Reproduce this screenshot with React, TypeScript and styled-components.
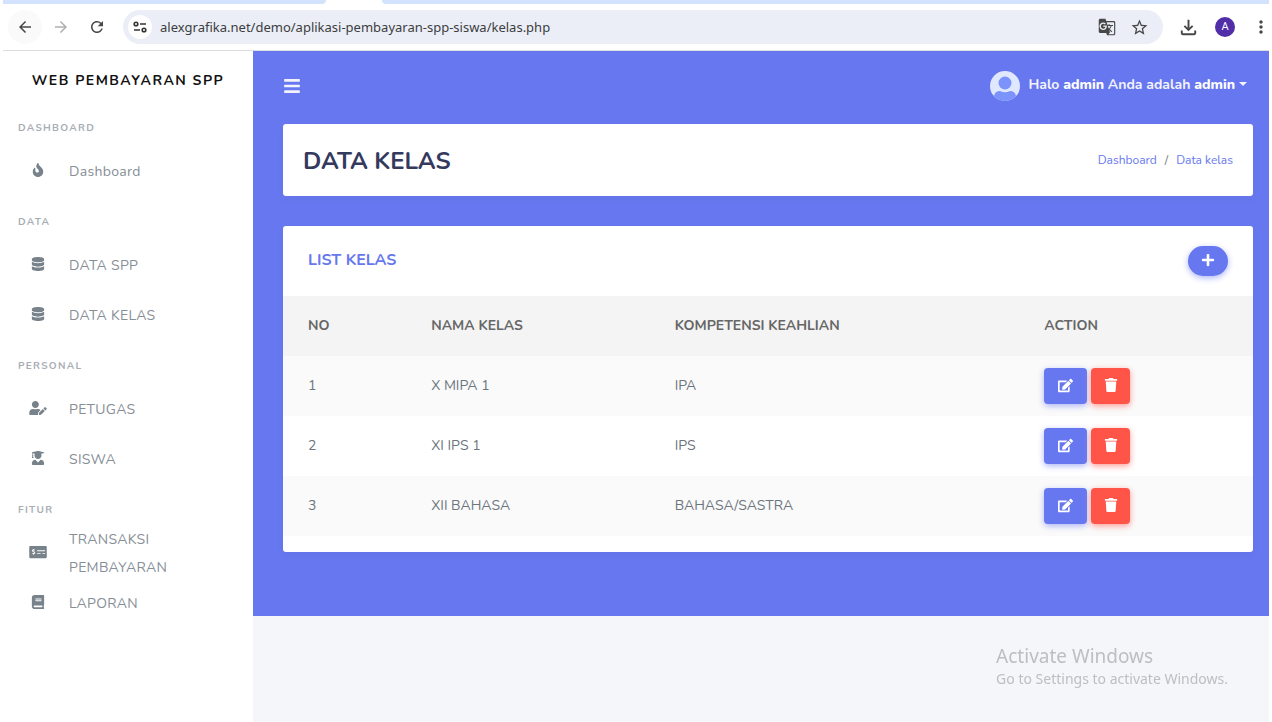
import React from "react";
import styled, { createGlobalStyle } from "styled-components";
import {
  FaBars, FaBook, FaDatabase, FaEdit, FaFire, FaMoneyCheckAlt, FaPlus, FaTrash, FaUserEdit, FaUserGraduate,
} from "react-icons/fa";
import {
  MdArrowBack, MdArrowForward, MdGTranslate, MdMoreVert, MdOutlineFileDownload, MdRefresh, MdStarBorder,
} from "react-icons/md";

const primary = "#6777ef";
const danger = "#ff5549";
const systemFont = `"Segoe UI", "Noto Sans", "Open Sans", sans-serif`;

const GlobalStyle = createGlobalStyle`
  *, *::before, *::after { box-sizing: border-box; }
  body {
    margin: 0;
    background: #fff;
    color: #6c757d;
    font: 400 14px/28px Nunito, Lato, sans-serif;
  }
  button, input { font: inherit; }
  button { cursor: pointer; border: 0; padding: 0; }
  a { text-decoration: none; color: inherit; }
  h1, h2, h4, ul, ol, p { margin: 0; padding: 0; }
  ul, ol { list-style: none; }
  svg { display: block; }
`;

const Window = styled.div`
  min-height: 100vh;
  display: flex;
  flex-direction: column;
  padding: 0 3px;
`;

const TabStrip = styled.div`
  display: flex;
  height: 4px;
  background: #fff;
`;

const TabGap = styled.div<{ $grow?: boolean }>`
  background: #d3e3fd;
  width: 323px;
  flex: ${(p) => (p.$grow ? "1" : "none")};
  margin-left: ${(p) => (p.$grow ? "56px" : "0")};
  border-radius: ${(p) => (p.$grow ? "0 0 0 8px" : "0 0 8px 0")};
`;

const Toolbar = styled.header`
  display: flex;
  align-items: center;
  height: 47px;
  padding: 0 0 0 5px;
  border-bottom: 1px solid #dcdee0;
`;

const ToolButton = styled.button<{ $shade?: boolean; $faded?: boolean }>`
  display: grid;
  place-items: center;
  flex: none;
  width: 34px;
  height: 34px;
  margin-right: 2px;
  border-radius: 50%;
  background: ${(p) => (p.$shade ? "#fafafa" : "transparent")};
  color: ${(p) => (p.$faded ? "#b0b0b0" : "#474747")};
`;

const AddressBar = styled.div`
  display: flex;
  align-items: center;
  flex: 1;
  height: 34px;
  margin: 0 8px 0 7px;
  padding: 0 8px 0 5px;
  border-radius: 17px;
  background: #ebeef7;
`;

const SiteInfo = styled.button`
  display: grid;
  place-items: center;
  flex: none;
  width: 24px;
  height: 24px;
  border-radius: 50%;
  background: #fff;
`;

const AddressInput = styled.input`
  flex: 1;
  min-width: 0;
  padding: 0 8px;
  border: 0;
  outline: 0;
  background: transparent;
  color: #3c3d40;
  font: 13px/20px ${systemFont};
`;

const BarButton = styled.button`
  display: grid;
  place-items: center;
  width: 32px;
  height: 32px;
  background: transparent;
  color: #474747;
`;

const Profile = styled.button`
  flex: none;
  width: 20px;
  height: 20px;
  margin: 0 16px 0 8px;
  border-radius: 50%;
  background: #512da8;
  color: #fff;
  font: 11px/20px Roboto, sans-serif;
`;

const MenuButton = styled(ToolButton)`
  width: 20px;
  margin: 0 -2px 0 0;
`;

const Page = styled.div`
  display: flex;
  flex: 1;
  background: #f4f6f9;
`;

const Sidebar = styled.nav`
  flex: none;
  width: 250px;
  background: #fff;
`;

const Brand = styled.a`
  display: block;
  height: 51px;
  padding-top: 16px;
  color: #111;
  font-size: 14px;
  font-weight: 700;
  line-height: 28px;
  letter-spacing: 1.5px;
  text-align: center;
`;

const SectionLabel = styled.h4`
  height: 44px;
  padding: 12px 15px 0;
  color: #a8adb5;
  font-size: 10px;
  font-weight: 700;
  line-height: 28px;
  letter-spacing: 1.3px;
`;

const MenuLink = styled.a`
  display: flex;
  align-items: center;
  height: 50px;
  padding: 0 20px;
  color: #868e96;
  font-size: 14px;
  line-height: 28px;
  letter-spacing: 0.3px;

  svg {
    flex: none;
    width: 30px;
    margin: 0 16px 2px 0;
    color: #78828a;
  }
  span { padding-top: 2px; }
`;

const Main = styled.main`
  flex: 1;
  min-width: 0;
`;

const Hero = styled.div`
  padding: 0 16px 64px 30px;
  background: ${primary};
`;

const TopNav = styled.div`
  display: flex;
  align-items: center;
  justify-content: space-between;
  height: 73px;
  padding: 0 6px 4px 0;
  color: #f2f3ff;
`;

const PlainButton = styled.button`
  display: flex;
  align-items: center;
  background: transparent;
  color: inherit;
`;

const UserButton = styled(PlainButton)`
  gap: 8px;
  font-size: 14px;
  font-weight: 700;
  line-height: 28px;

  span { padding-bottom: 2px; }
  b { font-weight: 800; color: #fff; }
`;

const Caret = styled.i`
  margin: 0 0 3px -4px;
  border: 4px solid transparent;
  border-top-color: currentColor;
  border-bottom: 0;
`;

const Card = styled.section`
  border-radius: 3px;
  background: #fff;
  box-shadow: 0 4px 8px rgba(0, 0, 0, 0.03);
`;

const TitleCard = styled(Card)`
  display: flex;
  align-items: center;
  justify-content: space-between;
  height: 72px;
  margin-bottom: 30px;
  padding: 0 20px;
`;

const Title = styled.h1`
  padding-top: 2px;
  color: #34395e;
  font-size: 24px;
  font-weight: 700;
  line-height: 28px;
`;

const Breadcrumb = styled.ol`
  display: flex;
  gap: 8px;
  color: ${primary};
  font-size: 12px;
  line-height: 18px;

  li + li::before {
    content: "/";
    margin-right: 8px;
    color: #6c757d;
  }
`;

const CardHeader = styled.div`
  display: flex;
  align-items: center;
  justify-content: space-between;
  height: 70px;
  padding: 0 25px;
`;

const CardTitle = styled.h2`
  padding-bottom: 2px;
  color: ${primary};
  font-size: 16px;
  font-weight: 700;
  line-height: 28px;
`;

const AddButton = styled.button`
  display: grid;
  place-items: center;
  width: 40px;
  height: 30px;
  padding-bottom: 2px;
  border-radius: 15px;
  background: ${primary};
  color: #fff;
  box-shadow: 0 2px 6px #acb5f6;
`;

const Table = styled.table`
  width: 100%;
  table-layout: fixed;
  border-collapse: collapse;

  th, td {
    height: 60px;
    padding: 0 25px;
    text-align: left;
    vertical-align: middle;
  }
  th { background: #f4f4f4; color: #666; font-weight: 700; }
  tbody tr:nth-child(odd) { background: #fafafa; }
`;

const Column = styled.col<{ $share: number }>`
  width: ${(p) => p.$share}%;
`;

const CardFoot = styled.div`
  height: 16px;
`;

const Actions = styled.div`
  display: flex;
  gap: 4px;
`;

const ActionButton = styled.button<{ $danger?: boolean }>`
  display: grid;
  place-items: center;
  height: 36px;
  width: ${(p) => (p.$danger ? "39px" : "43px")};
  padding-bottom: 2px;
  border-radius: 4px;
  background: ${(p) => (p.$danger ? danger : primary)};
  color: #fff;
  box-shadow: 0 2px 6px ${(p) => (p.$danger ? "#fd9b96" : "#acb5f6")};
`;

const Watermark = styled.aside`
  position: fixed;
  right: 44px;
  bottom: 34px;
  color: #bdbec1;
  font: 14px/18px ${systemFont};
  pointer-events: none;
`;

const WatermarkTitle = styled.p`
  font-size: 19px;
  line-height: 28px;
`;

const TuneIcon = () => (
  <svg width="14" height="12" viewBox="0 0 14 12" fill="none" stroke="#333" strokeWidth="1.6">
    <circle cx="3" cy="3" r="1.8" />
    <path d="M7 3h6M1 9h6" />
    <circle cx="11" cy="9" r="1.8" />
  </svg>
);

const Avatar = () => (
  <svg width="30" height="30" viewBox="0 0 30 30" role="img" aria-label="admin">
    <defs>
      <clipPath id="avatar-clip"><circle cx="15" cy="15" r="15" /></clipPath>
    </defs>
    <g clipPath="url(#avatar-clip)">
      <rect width="30" height="30" fill="#dfe8ff" />
      <circle cx="15" cy="12" r="6.5" fill="#7b93fb" />
      <path d="M4 30V25Q5 20 10 20Q15 22.500 20 20Q25 20 26 25V30Z" fill="#7b93fb" />
    </g>
  </svg>
);

const sections = [
  { label: "DASHBOARD", items: [{ text: "Dashboard", Icon: FaFire }] },
  { label: "DATA", items: [{ text: "DATA SPP", Icon: FaDatabase }, { text: "DATA KELAS", Icon: FaDatabase }] },
  { label: "PERSONAL", items: [{ text: "PETUGAS", Icon: FaUserEdit }, { text: "SISWA", Icon: FaUserGraduate }] },
  { label: "FITUR", items: [{ text: "TRANSAKSI PEMBAYARAN", Icon: FaMoneyCheckAlt }, { text: "LAPORAN", Icon: FaBook }] },
];

const classes = [
  { name: "X MIPA 1", major: "IPA" },
  { name: "XI IPS 1", major: "IPS" },
  { name: "XII BAHASA", major: "BAHASA/SASTRA" },
];

export default function App() {
  return (
    <Window>
      <GlobalStyle />
      <TabStrip><TabGap /><TabGap $grow /></TabStrip>
      <Toolbar>
        <ToolButton $shade aria-label="Back"><MdArrowBack size={18} /></ToolButton>
        <ToolButton $faded aria-label="Forward"><MdArrowForward size={18} /></ToolButton>
        <ToolButton aria-label="Reload"><MdRefresh size={18} /></ToolButton>
        <AddressBar>
          <SiteInfo aria-label="Site information"><TuneIcon /></SiteInfo>
          <AddressInput
            aria-label="Address"
            defaultValue="alexgrafika.net/demo/aplikasi-pembayaran-spp-siswa/kelas.php"
          />
          <BarButton aria-label="Translate"><MdGTranslate size={18} /></BarButton>
          <BarButton aria-label="Bookmark"><MdStarBorder size={19} /></BarButton>
        </AddressBar>
        <ToolButton aria-label="Downloads"><MdOutlineFileDownload size={23} /></ToolButton>
        <Profile aria-label="Profile">A</Profile>
        <MenuButton aria-label="Browser menu"><MdMoreVert size={20} /></MenuButton>
      </Toolbar>
      <Page>
        <Sidebar>
          <Brand href="#">WEB PEMBAYARAN SPP</Brand>
          {sections.map(({ label, items }) => (
            <section key={label}>
              <SectionLabel>{label}</SectionLabel>
              <ul>
                {items.map(({ text, Icon }) => (
                  <li key={text}>
                    <MenuLink href="#"><Icon size={14} /><span>{text}</span></MenuLink>
                  </li>
                ))}
              </ul>
            </section>
          ))}
        </Sidebar>
        <Main>
          <Hero>
            <TopNav>
              <PlainButton aria-label="Toggle sidebar"><FaBars size={18} /></PlainButton>
              <UserButton>
                <Avatar />
                <span>Halo <b>admin</b> Anda adalah <b>admin</b></span>
                <Caret />
              </UserButton>
            </TopNav>
            <TitleCard>
              <Title>DATA KELAS</Title>
              <Breadcrumb>
                <li><a href="#">Dashboard</a></li>
                <li><a href="#">Data kelas</a></li>
              </Breadcrumb>
            </TitleCard>
            <Card>
              <CardHeader>
                <CardTitle>LIST KELAS</CardTitle>
                <AddButton aria-label="Tambah kelas"><FaPlus size={14} /></AddButton>
              </CardHeader>
              <Table>
                <colgroup>
                  <Column $share={12.7} />
                  <Column $share={25.1} />
                  <Column $share={38.1} />
                  <Column $share={24.1} />
                </colgroup>
                <thead>
                  <tr><th>NO</th><th>NAMA KELAS</th><th>KOMPETENSI KEAHLIAN</th><th>ACTION</th></tr>
                </thead>
                <tbody>
                  {classes.map(({ name, major }, i) => (
                    <tr key={name}>
                      <td>{i + 1}</td>
                      <td>{name}</td>
                      <td>{major}</td>
                      <td>
                        <Actions>
                          <ActionButton aria-label={`Edit ${name}`}><FaEdit size={15} /></ActionButton>
                          <ActionButton $danger aria-label={`Hapus ${name}`}><FaTrash size={14} /></ActionButton>
                        </Actions>
                      </td>
                    </tr>
                  ))}
                </tbody>
              </Table>
              <CardFoot />
            </Card>
          </Hero>
        </Main>
      </Page>
      <Watermark>
        <WatermarkTitle>Activate Windows</WatermarkTitle>
        <p>Go to Settings to activate Windows.</p>
      </Watermark>
    </Window>
  );
}
